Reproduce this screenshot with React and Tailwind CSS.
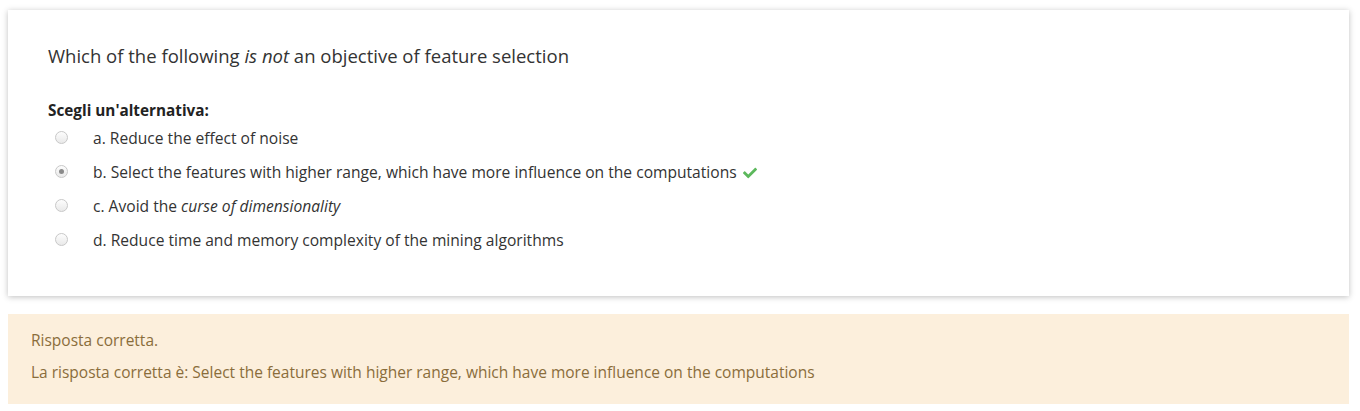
import { FaCheck } from 'react-icons/fa';

const options = [
  { key: 'a', text: <>a. Reduce the effect of noise</> },
  { key: 'b', text: <>b. Select the features with higher range, which have more influence on the computations</>, checked: true },
  { key: 'c', text: <>c. Avoid the <em>curse of dimensionality</em></> },
  { key: 'd', text: <>d. Reduce time and memory complexity of the mining algorithms</> },
];

function Radio({ checked }) {
  return (
    <span className="w-[13px] h-[13px] rounded-full border border-[#c8c8c8] bg-gradient-to-b from-[#fdfdfd] to-[#e9e9e9] flex items-center justify-center">
      {checked && <span className="w-[5px] h-[5px] rounded-full bg-[#8a8a8a]" />}
    </span>
  );
}

export default function App() {
  return (
    <div className="bg-white pt-[10px] pl-[8px] pr-[11px] pb-[7px]" style={{ fontFamily: '"Open Sans", "Noto Sans", sans-serif' }}>
      <div className="bg-white shadow-[0_1px_6px_rgba(0,0,0,0.25)] px-[40px] pt-[32px] pb-[40px] h-[286px]">
        <p className="text-[18.5px] text-[#333] leading-[27px]">
          Which of the following <em>is not</em> an objective of feature selection
        </p>
        <p className="mt-[30px] text-[15.3px] font-bold text-[#222] leading-[22px]">Scegli un'alternativa:</p>
        <div className="flex flex-col mt-[1px]">
          {options.map((o) => (
            <div key={o.key} className="flex items-center h-[34px] text-[15.6px] text-[#333]">
              <div className="w-[45px] pl-[7px] flex items-center -mt-[4px]">
                <Radio checked={o.checked} />
              </div>
              <span>{o.text}</span>
              {o.checked && <FaCheck className="ml-[6px] text-[#5cb85c]" size={14} />}
            </div>
          ))}
        </div>
      </div>
      <div className="mt-[18px] bg-[#fcefdc] text-[#8a6d3b] px-[23px] pt-[15px] h-[90px] text-[15.5px]">
        <p className="leading-[22px]">Risposta corretta.</p>
        <p className="leading-[22px] mt-[10px]">La risposta corretta è: Select the features with higher range, which have more influence on the computations</p>
      </div>
    </div>
  );
}
